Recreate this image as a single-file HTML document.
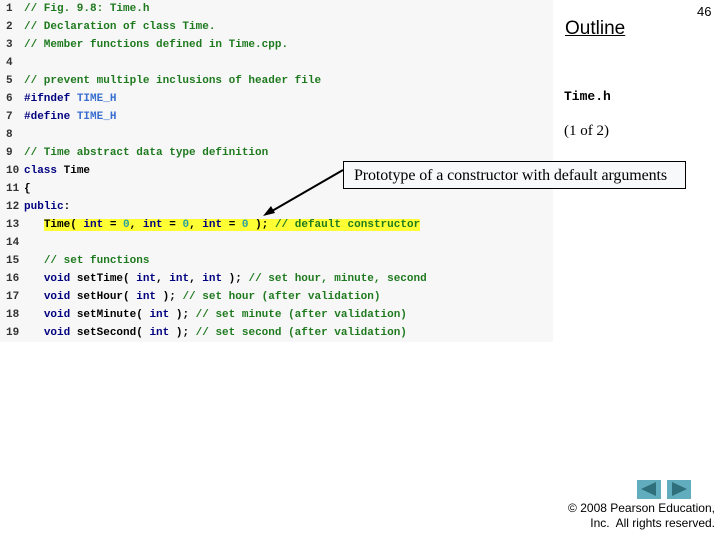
<!DOCTYPE html>
<html><head><style>
body{margin:0;width:720px;height:540px;background:#fff;position:relative;overflow:hidden;font-family:"Liberation Sans",sans-serif}
#code{position:absolute;left:0;top:0;width:553px;height:342px;background:#f7f7f7}
.l{position:absolute;left:0;height:18px;line-height:18px;font-family:"Liberation Mono",monospace;font-size:11px;font-weight:bold;white-space:pre;color:#000}
.n{display:inline-block;width:24px;padding-left:6px;box-sizing:border-box;color:#333}
.c{color:#1f7a1f}.k{color:#000080}.m{color:#3a6fd0}.z{color:#2aa0a0}
.hl{background:#ffff33}
</style></head><body>
<div id="code">
<div class="l" style="top:0px"><span class="n">1</span><span class="c">// Fig. 9.8: Time.h</span></div>
<div class="l" style="top:18px"><span class="n">2</span><span class="c">// Declaration of class Time.</span></div>
<div class="l" style="top:36px"><span class="n">3</span><span class="c">// Member functions defined in Time.cpp.</span></div>
<div class="l" style="top:54px"><span class="n">4</span></div>
<div class="l" style="top:72px"><span class="n">5</span><span class="c">// prevent multiple inclusions of header file</span></div>
<div class="l" style="top:90px"><span class="n">6</span><span class="k">#ifndef</span> <span class="m">TIME_H</span></div>
<div class="l" style="top:108px"><span class="n">7</span><span class="k">#define</span> <span class="m">TIME_H</span></div>
<div class="l" style="top:126px"><span class="n">8</span></div>
<div class="l" style="top:144px"><span class="n">9</span><span class="c">// Time abstract data type definition</span></div>
<div class="l" style="top:162px"><span class="n">10</span><span class="k">class</span> Time</div>
<div class="l" style="top:180px"><span class="n">11</span>{</div>
<div class="l" style="top:198px"><span class="n">12</span><span class="k">public</span>:</div>
<div class="l" style="top:216px"><span class="n">13</span>   <span class="hl">Time( <span class="k">int</span> = <span class="z">0</span>, <span class="k">int</span> = <span class="z">0</span>, <span class="k">int</span> = <span class="z">0</span> ); <span class="c">// default constructor</span></span></div>
<div class="l" style="top:234px"><span class="n">14</span></div>
<div class="l" style="top:252px"><span class="n">15</span>   <span class="c">// set functions</span></div>
<div class="l" style="top:270px"><span class="n">16</span>   <span class="k">void</span> setTime( <span class="k">int</span>, <span class="k">int</span>, <span class="k">int</span> ); <span class="c">// set hour, minute, second</span></div>
<div class="l" style="top:288px"><span class="n">17</span>   <span class="k">void</span> setHour( <span class="k">int</span> ); <span class="c">// set hour (after validation)</span></div>
<div class="l" style="top:306px"><span class="n">18</span>   <span class="k">void</span> setMinute( <span class="k">int</span> ); <span class="c">// set minute (after validation)</span></div>
<div class="l" style="top:324px"><span class="n">19</span>   <span class="k">void</span> setSecond( <span class="k">int</span> ); <span class="c">// set second (after validation)</span></div>
</div>
<div style="position:absolute;left:565px;top:18px;font-size:19px;text-decoration:underline">Outline</div>
<div style="position:absolute;left:697px;top:4px;font-size:13px">46</div>
<div style="position:absolute;left:564px;top:89px;font-family:'Liberation Mono',monospace;font-weight:bold;font-size:13px">Time.h</div>
<div style="position:absolute;left:564px;top:123px;font-family:'Liberation Serif',serif;font-size:15px">(1 of 2)</div>
<div style="position:absolute;left:343px;top:161px;width:341px;height:26px;border:1px solid #000;background:#f7f9fb;font-family:'Liberation Serif',serif;font-size:16px;line-height:28px;white-space:nowrap;overflow:hidden"><span style="margin-left:10px;letter-spacing:-0.1px">Prototype of a constructor with default arguments</span></div>
<svg style="position:absolute;left:0;top:0" width="720" height="540"><line x1="343" y1="170" x2="272" y2="211" stroke="#000" stroke-width="2"/><polygon points="263,216 271,206 275,213" fill="#000"/></svg>
<div style="position:absolute;left:637px;top:480px;width:24px;height:19px;background:#62adbd"></div>
<div style="position:absolute;left:667px;top:480px;width:24px;height:19px;background:#62adbd"></div>
<svg style="position:absolute;left:0;top:0" width="720" height="540"><polygon points="641,489 656,482 656,496" fill="#2f6f7c"/><polygon points="687,489 672,482 672,496" fill="#2f6f7c"/></svg>
<div style="position:absolute;right:5px;top:501px;font-size:12px;text-align:right;line-height:15px">© 2008 Pearson Education,<br>Inc.&nbsp; All rights reserved.</div>
</body></html>
